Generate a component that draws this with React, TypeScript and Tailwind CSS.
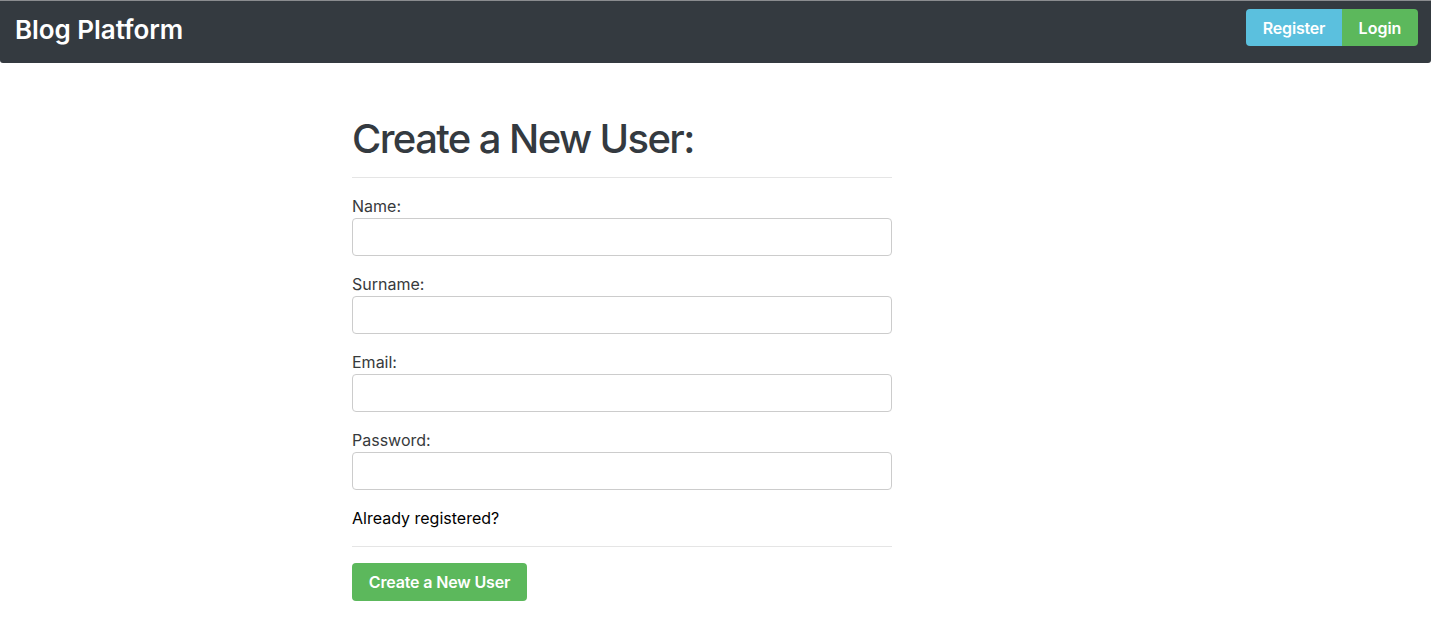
import React from 'react';

const fields = ['Name:', 'Surname:', 'Email:', 'Password:'];

function Field({ label }: { label: string }) {
  return (
    <div className="mb-[17px]">
      <label className="block text-[16px] leading-[22px] text-[#373a3c] mb-[1px]">{label}</label>
      <input
        type={label === 'Password:' ? 'password' : 'text'}
        className="block w-full h-[38px] rounded-[4px] border border-[#cccccc] bg-white px-3 outline-none"
      />
    </div>
  );
}

export default function App() {
  return (
    <div className="min-h-screen bg-white font-['Inter',sans-serif]">
      <nav className="h-[63px] bg-[#343a40] border-t border-[#8a8c8f] rounded-b-[3px] flex items-start justify-between pl-[15px] pr-[13px] pt-[8px]">
        <a className="mt-[8px] text-white text-[26px] font-semibold tracking-[-0.05px] leading-none">Blog Platform</a>
        <div className="flex">
          <button className="h-[37px] w-[96px] rounded-l-[4px] bg-[#5bc0de] text-white text-[16px] font-semibold tracking-[-0.2px]">
            Register
          </button>
          <button className="h-[37px] w-[76px] rounded-r-[4px] bg-[#5cb85c] text-white text-[16px] font-semibold">
            Login
          </button>
        </div>
      </nav>

      <main className="ml-[352px] w-[540px] pt-[52px]">
        <h1 className="text-[40px] font-medium leading-[48px] text-[#343a40] tracking-[-1.6px]">Create a New User:</h1>
        <hr className="mt-[14px] mb-[17px] border-t border-[#e5e5e5]" />
        {fields.map((f) => (
          <Field key={f} label={f} />
        ))}
        <p className="text-[16px] leading-[22px] text-black mt-[13px]">Already registered?</p>
        <hr className="mt-[17px] mb-[16px] border-t border-[#e5e5e5]" />
        <button className="h-[38px] w-[175px] rounded-[4px] bg-[#5cb85c] text-white text-[16px] font-semibold tracking-[-0.15px]">
          Create a New User
        </button>
      </main>
    </div>
  );
}
